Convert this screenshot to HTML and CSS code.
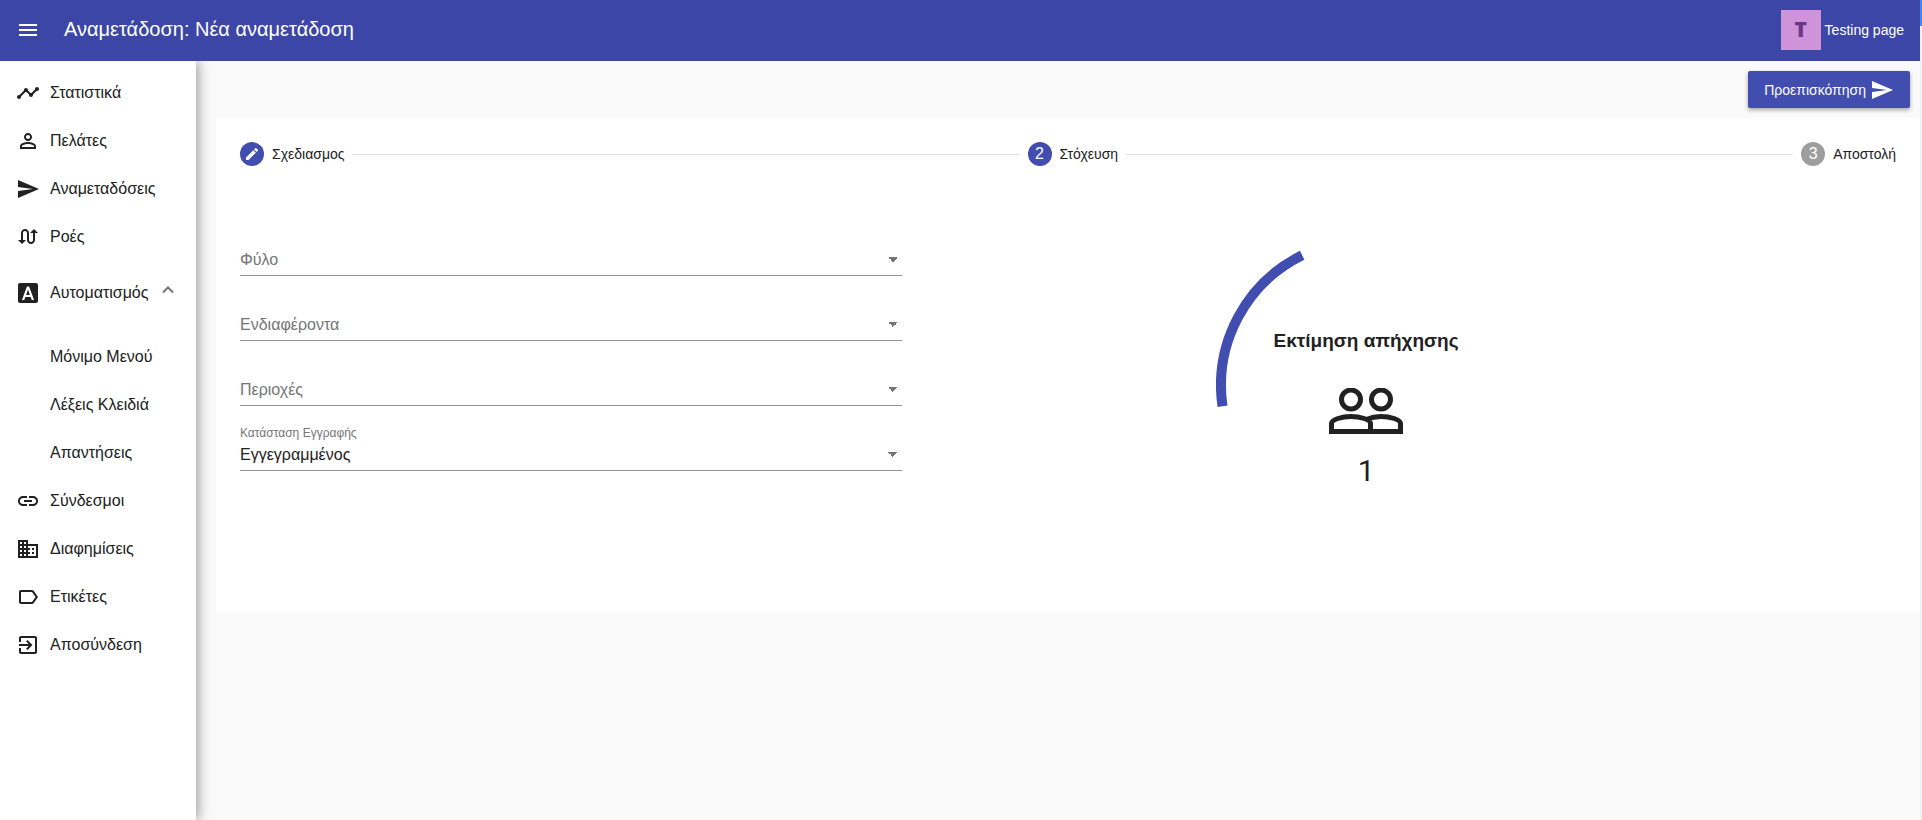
FILE: index.html
```html
<!DOCTYPE html>
<html lang="el">
<head>
<meta charset="utf-8">
<title>Αναμετάδοση: Νέα αναμετάδοση</title>
<link rel="stylesheet" href="styles.css">
</head>
<body>
<div class="app">
  <header class="topbar">
    <button class="menu-button" type="button" aria-label="Μενού">
      <svg class="icon" viewBox="0 0 24 24"><path d="M3 18h18v-2H3v2zm0-5h18v-2H3v2zm0-7v2h18V6H3z"/></svg>
    </button>
    <h1 class="title">Αναμετάδοση: Νέα αναμετάδοση</h1>
    <div class="account"><span class="avatar">T</span><span>Testing page</span></div>
  </header>
  <div class="body">
    <nav class="sidebar">
      <a class="nav-item" href="#"><svg class="icon" viewBox="0 0 24 24"><path d="M23 8c0 1.1-.9 2-2 2-.18 0-.35-.02-.51-.07l-3.56 3.55c.05.16.07.34.07.52 0 1.1-.9 2-2 2s-2-.9-2-2c0-.18.02-.36.07-.52l-2.55-2.55c-.16.05-.34.07-.52.07s-.36-.02-.52-.07l-4.55 4.56c.05.16.07.33.07.51 0 1.1-.9 2-2 2s-2-.9-2-2 .9-2 2-2c.18 0 .35.02.51.07l4.56-4.55C8.02 9.36 8 9.18 8 9c0-1.1.9-2 2-2s2 .9 2 2c0 .18-.02.36-.07.52l2.55 2.55c.16-.05.34-.07.52-.07s.36.02.52.07l3.55-3.56C19.02 8.35 19 8.18 19 8c0-1.1.9-2 2-2s2 .9 2 2z"/></svg>Στατιστικά</a>
      <a class="nav-item" href="#"><svg class="icon" viewBox="0 0 24 24"><path d="M12 5.9a2.1 2.1 0 1 1 0 4.2 2.1 2.1 0 0 1 0-4.2m0 9c2.97 0 6.1 1.46 6.1 2.1v1.1H5.9V17c0-.64 3.13-2.1 6.1-2.1M12 4C9.79 4 8 5.79 8 8s1.790 4 4 4 4-1.790 4-4-1.790-4-4-4zm0 9c-2.670 0-8 1.340-8 4v3h16v-3c0-2.660-5.330-4-8-4z"/></svg>Πελάτες</a>
      <a class="nav-item" href="#"><svg class="icon" viewBox="0 0 24 24"><path d="M2.010 21L23 12 2.010 3 2 10l15 2-15 2z"/></svg>Αναμεταδόσεις</a>
      <a class="nav-item" href="#"><svg class="icon" viewBox="0 0 24 24"><path d="M18 4l-4 4h3v7c0 1.100-.9 2-2 2s-2-.9-2-2V8c0-2.210-1.790-4-4-4S5 5.790 5 8v7H2l4 4 4-4H7V8c0-1.100.9-2 2-2s2 .9 2 2v7c0 2.210 1.790 4 4 4s4-1.790 4-4V8h3l-4-4z"/></svg>Ροές</a>
      <button class="nav-item nav-group" type="button" aria-expanded="true">
        <svg class="icon" viewBox="0 0 24 24"><path fill-rule="evenodd" d="M4 2h16c1.100 0 2 .9 2 2v16c0 1.100-.9 2-2 2H4c-1.100 0-2-.9-2-2V4c0-1.100.9-2 2-2zm1.930 17h2.300l1.140-3h5.260l1.130 3h2.300L13.070 5.500h-2.140zM10.140 14L12 8.500l1.860 5.500z"/></svg>Αυτοματισμός
        <svg class="chevron" viewBox="0 0 12 8"><path d="M1 6.500L6 1.500L11 6.500"/></svg>
      </button>
      <div class="subnav">
        <a class="nav-item nav-child" href="#">Μόνιμο Μενού</a>
        <a class="nav-item nav-child" href="#">Λέξεις Κλειδιά</a>
        <a class="nav-item nav-child" href="#">Απαντήσεις</a>
      </div>
      <a class="nav-item" href="#"><svg class="icon" viewBox="0 0 24 24"><path d="M3.900 12c0-1.710 1.390-3.100 3.100-3.100h4V7H7c-2.760 0-5 2.240-5 5s2.240 5 5 5h4v-1.900H7c-1.710 0-3.100-1.390-3.100-3.100zM8 13h8v-2H8v2zm9-6h-4v1.900h4c1.710 0 3.100 1.390 3.100 3.100s-1.390 3.100-3.100 3.100h-4V17h4c2.760 0 5-2.240 5-5s-2.240-5-5-5z"/></svg>Σύνδεσμοι</a>
      <a class="nav-item" href="#"><svg class="icon" viewBox="0 0 24 24"><path d="M12 7V3H2v18h20V7H12zM6 19H4v-2h2v2zm0-4H4v-2h2v2zm0-4H4V9h2v2zm0-4H4V5h2v2zm4 12H8v-2h2v2zm0-4H8v-2h2v2zm0-4H8V9h2v2zm0-4H8V5h2v2zm10 12h-8v-2h2v-2h-2v-2h2v-2h-2V9h8v10zm-2-8h-2v2h2v-2zm0 4h-2v2h2v-2z"/></svg>Διαφημίσεις</a>
      <a class="nav-item" href="#"><svg class="icon" viewBox="0 0 24 24"><path d="M17.630 5.840C17.270 5.330 16.670 5 16 5L5 5.010C3.900 5.010 3 5.900 3 7v10c0 1.100.9 1.990 2 1.990L16 19c.67 0 1.270-.33 1.630-.84L22 12l-4.370-6.160zM16 17H5V7h11l3.550 5L16 17z"/></svg>Ετικέτες</a>
      <a class="nav-item" href="#"><svg class="icon" viewBox="0 0 24 24"><path d="M10.090 15.590L11.500 17l5-5-5-5-1.410 1.410L12.670 11H3v2h9.670l-2.580 2.590zM19 3H5c-1.110 0-2 .9-2 2v4h2V5h14v14H5v-4H3v4c0 1.100.89 2 2 2h14c1.100 0 2-.9 2-2V5c0-1.100-.9-2-2-2z"/></svg>Αποσύνδεση</a>
    </nav>
    <main class="main">
      <div class="actions">
        <button class="preview" type="button">Προεπισκόπηση<svg class="icon" viewBox="0 0 24 24"><path d="M2.010 21L23 12 2.010 3 2 10l15 2-15 2z"/></svg></button>
      </div>
      <section class="card">
        <ol class="stepper">
          <li class="step"><span class="step-mark"><svg class="pencil" viewBox="0 0 24 24"><path d="M3 17.250V21h3.750L17.810 9.940l-3.750-3.750L3 17.250zM20.710 7.040c.39-.39.39-1.020 0-1.410l-2.340-2.340c-.39-.39-1.020-.39-1.410 0l-1.830 1.830 3.750 3.750 1.830-1.830z"/></svg></span>Σχεδιασμος</li>
          <li class="step-line" role="presentation"></li>
          <li class="step" aria-current="step"><span class="step-mark">2</span>Στόχευση</li>
          <li class="step-line" role="presentation"></li>
          <li class="step"><span class="step-mark step-todo">3</span>Αποστολή</li>
        </ol>
        <div class="columns">
          <form class="filters">
            <div class="field">
              <select class="select select-empty" aria-label="Φύλο"><option>Φύλο</option></select>
            </div>
            <div class="field">
              <select class="select select-empty" aria-label="Ενδιαφέροντα"><option>Ενδιαφέροντα</option></select>
            </div>
            <div class="field">
              <select class="select select-empty" aria-label="Περιοχές"><option>Περιοχές</option></select>
            </div>
            <div class="field">
              <label class="label" for="status">Κατάσταση Εγγραφής</label>
              <select class="select" id="status"><option>Εγγεγραμμένος</option></select>
            </div>
          </form>
          <div class="estimate">
            <div class="gauge">
              <svg class="arc" viewBox="0 0 300 300"><path d="M6.500 171.200A145 145 0 0 1 86.200 20.300"/></svg>
              <h2 class="gauge-title">Εκτίμηση απήχησης</h2>
              <svg class="people" viewBox="0 0 74 46"><circle cx="22" cy="11.500" r="9.500"/><circle cx="52" cy="11.500" r="9.500"/><path d="M2.500 43.500V35.500C2.500 31.500 13 28.500 22 28.500S41.500 31.500 41.500 35.500V43.500ZM37 31.500C42 29.500 47 28.500 52 28.500C61 28.500 71.500 31.500 71.500 35.500V43.500H41.500"/></svg>
              <span class="gauge-value">1</span>
            </div>
          </div>
        </div>
      </section>
    </main>
  </div>
  <div class="edge"></div>
</div>
</body>
</html>
```
FILE: styles.css
```css
* { box-sizing: border-box; }
body {
  margin: 0;
  background: #fafafa;
  color: #212121;
  font: 16px/24px "Liberation Sans", Arial, sans-serif;
}
button { border: 0; background: none; color: inherit; font: inherit; cursor: pointer; }
.app {
  position: relative;
  display: flex;
  flex-direction: column;
  min-height: 100vh;
  border-right: 2px solid #f1f1f1;
}
.edge { position: absolute; top: 0; right: -2px; z-index: 3; width: 2px; height: 26px; background: #4285f4; }
.icon { flex: none; width: 24px; height: 24px; fill: currentColor; }

.topbar {
  position: relative;
  z-index: 2;
  display: flex;
  align-items: center;
  height: 61px;
  padding: 0 16px 2px;
  background: #3c46a6;
  color: #fff;
}
.menu-button { display: flex; padding: 0; }
.title { margin: 0 0 0 24px; padding-bottom: 2px; font-size: 20px; font-weight: 400; }
.account { display: flex; align-items: center; gap: 4px; margin-left: auto; font-size: 14px; }
.avatar {
  width: 40px;
  height: 40px;
  background: #ce93d8;
  color: #6a3788;
  font: 800 21px/38px "Open Sans", sans-serif;
  text-align: center;
}

.body { display: flex; flex: 1; }
.sidebar {
  position: relative;
  z-index: 1;
  flex: none;
  width: 196px;
  padding-top: 8px;
  background: #fff;
  box-shadow: 2px 0 12px rgba(0, 0, 0, .4);
  clip-path: inset(0 -20px 0 0);
}
.nav-item {
  display: flex;
  align-items: center;
  gap: 10px;
  width: 100%;
  height: 48px;
  padding: 0 16px;
  color: inherit;
  text-decoration: none;
}
.nav-group { height: 64px; }
.subnav { padding-top: 8px; }
.nav-child { padding-left: 50px; }
.chevron { width: 12px; height: 8px; margin: 0 0 6px 4px; fill: none; stroke: #757575; stroke-width: 2; }

.main { flex: 1; min-width: 0; padding-left: 20px; }
.actions { display: flex; justify-content: flex-end; padding: 10px; }
.preview {
  display: flex;
  align-items: center;
  gap: 4px;
  height: 37px;
  padding: 0 16px;
  border-radius: 2px;
  background: #424db0;
  color: #fff;
  font-size: 14px;
  box-shadow: 0 2px 4px rgba(0, 0, 0, .35);
}
.card { padding: 0 24px 78px; background: #fff; }
.stepper {
  display: flex;
  align-items: center;
  gap: 8px;
  height: 72px;
  margin: 0;
  padding: 0;
  list-style: none;
  font-size: 14px;
}
.step { display: flex; align-items: center; gap: 8px; }
.step-mark {
  display: flex;
  align-items: center;
  justify-content: center;
  width: 24px;
  height: 24px;
  border-radius: 50%;
  background: #424db0;
  color: #fff;
  font-size: 16px;
}
.step-todo { background: #9e9e9e; }
.pencil { width: 16px; height: 16px; fill: currentColor; }
.step-line { flex: 1; height: 1px; background: #e0e0e0; }

.columns { display: grid; grid-template-columns: 1fr 1fr; padding-top: 40px; }
.filters { width: 80%; }
.field { display: flex; flex-direction: column; justify-content: flex-end; height: 46px; margin-bottom: 19px; }
.label { color: #757575; font-size: 12px; line-height: 16px; }
.select {
  width: 100%;
  height: 30px;
  padding: 0 0 2px;
  border: 0;
  border-bottom: 1px solid #949494;
  border-radius: 0;
  appearance: none;
  background: linear-gradient(to bottom right, #757575 50%, transparent 50%) right 4px top 11px / 5px 5px no-repeat,
    linear-gradient(to bottom left, #757575 50%, transparent 50%) right 9px top 11px / 5px 5px no-repeat;
  color: #212121;
  font: inherit;
}
.select-empty { color: #757575; }

.estimate { display: flex; justify-content: center; width: 72%; padding-top: 5px; }
.gauge {
  position: relative;
  display: flex;
  flex-direction: column;
  align-items: center;
  width: 300px;
  height: 300px;
  padding-top: 94px;
}
.arc { position: absolute; inset: 0; fill: none; stroke: #424db0; stroke-width: 10; }
.gauge-title { margin: 0; font-size: 19px; line-height: 24px; }
.people { width: 74px; height: 46px; margin: 35px 0 19px; fill: none; stroke: #212121; stroke-width: 5; }
.gauge-value { font-family: Roboto, sans-serif; font-size: 30px; line-height: 36px; }
```
